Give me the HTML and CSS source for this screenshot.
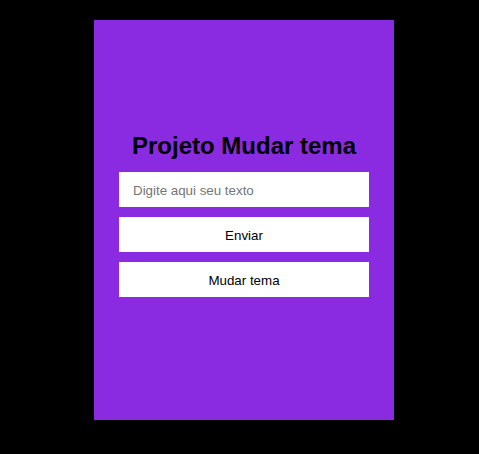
FILE: index.html
```html
<!DOCTYPE html>
<html lang="pt">
<head>
<meta charset="utf-8">
<title>Projeto Mudar tema</title>
<link rel="stylesheet" href="styles.css">
</head>
<body>
<main class="card">
  <h1 class="title">Projeto Mudar tema</h1>
  <input class="field" type="text" placeholder="Digite aqui seu texto">
  <button class="btn" type="button">Enviar</button>
  <button class="btn" type="button">Mudar tema</button>
</main>
</body>
</html>
```
FILE: styles.css
```css
html, body {
  margin: 0;
  background: #000;
}
body {
  padding: 20px 0 0 94px;
  font-family: "Liberation Sans", Arial, sans-serif;
}
.card {
  box-sizing: border-box;
  width: 300px;
  height: 400px;
  background: #8a2be2;
  padding-top: 112px;
  display: flex;
  flex-direction: column;
  align-items: center;
}
.title {
  margin: 0 0 12px;
  font-size: 24px;
  font-weight: bold;
  line-height: 28px;
  color: #000;
}
.field, .btn {
  box-sizing: border-box;
  width: 250px;
  height: 35px;
  border: none;
  background: #fff;
  font-family: "Liberation Sans", Arial, sans-serif;
  font-size: 13.333px;
  color: #000;
  margin-bottom: 10px;
  outline: none;
}
.field {
  padding: 1px 14px 0;
}
.field::placeholder {
  color: #757575;
}
.btn {
  padding: 2px 0 0;
}
```
